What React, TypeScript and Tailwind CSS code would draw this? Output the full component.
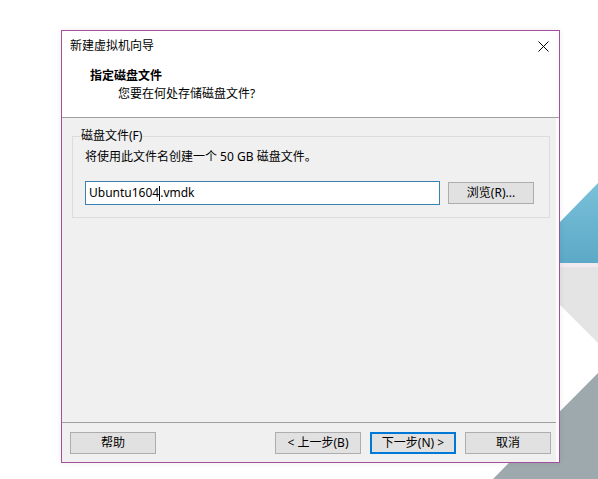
import React from "react";

const font = "font-['Noto_Sans','Noto_Sans_CJK_SC',sans-serif]";

function Btn({ label, primary }: { label: string; primary?: boolean }) {
  return (
    <div
      className={
        "w-[86px] h-[22px] flex items-center justify-center text-[12px] leading-[18px] text-black bg-[#e1e1e1] " +
        (primary ? "border-2 border-[#0078d7]" : "border border-[#adadad]")
      }
    >
      {label}
    </div>
  );
}

export default function App() {
  return (
    <div className={"relative w-[598px] h-[479px] overflow-hidden bg-white pt-[30px] pl-[61px] " + font}>
      <svg className="absolute inset-0" width="598" height="479" viewBox="0 0 598 479">
        <defs>
          <linearGradient id="bl" x1="0" y1="0" x2="0" y2="1">
            <stop offset="0" stopColor="#7ac0d9" />
            <stop offset="1" stopColor="#5ca9c7" />
          </linearGradient>
        </defs>
        <polygon points="520,263 598,183 598,263" fill="url(#bl)" />
        <rect x="520" y="263" width="78" height="4" fill="#f1eaf0" />
        <polygon points="520,267 598,267 598,343 522,267" fill="#e4e4e4" />
        <polygon points="598,373 598,479 493,479" fill="#9ea9ae" />
      </svg>

      <div className="relative w-[499px] h-[433px] border border-[#a4509c] bg-white flex flex-col shadow-[0_0_6px_rgba(0,0,0,0.08)]">
        {/* title bar */}
        <div className="h-[30px] flex items-center justify-between pl-[8px] pr-[10px] text-[12px] leading-[18px] text-black">
          <span>新建虚拟机向导</span>
          <svg width="11" height="11" viewBox="0 0 11 11">
            <path d="M0.5 0.5 L10.5 10.5 M10.5 0.5 L0.5 10.5" stroke="#000" strokeWidth="1" />
          </svg>
        </div>
        {/* header */}
        <div className="h-[57px] border-b border-[#a0a0a0] pt-[6px] text-[12px] leading-[18px] text-black">
          <div className="pl-[28px] font-bold">指定磁盘文件</div>
          <div className="pl-[56px]">您要在何处存储磁盘文件?</div>
        </div>
        {/* body */}
        <div className="h-[305px] border-b border-[#a0a0a0] bg-[#f0f0f0] mr-[3px] pt-[18px] pl-[10px]">
          <div className="relative w-[478px] h-[82px] border border-[#dcdcdc] pt-[11px] pl-[12px] text-[12px] leading-[18px] text-black">
            <span className="absolute left-[7px] top-[-10px] bg-[#f0f0f0] px-[1px]">磁盘文件(F)</span>
            <div>将使用此文件名创建一个 50 GB 磁盘文件。</div>
            <div className="mt-[15px] flex items-center gap-[8px]">
              <div className="w-[355px] h-[24px] border border-[#3c7fb1] bg-white flex items-center pl-[3px]">
                <span>Ubuntu1604</span>
                <span className="inline-block w-px h-[15px] bg-black" />
                <span>.vmdk</span>
              </div>
              <Btn label="浏览(R)..." />
            </div>
          </div>
        </div>
        {/* footer */}
        <div className="flex-1 bg-[#f0f0f0] mr-[3px] pt-[9px] pl-[8px] flex items-start">
          <Btn label="帮助" />
          <div className="ml-[119px] flex gap-[9px]">
            <Btn label="< 上一步(B)" />
            <Btn label="下一步(N) >" primary />
            <Btn label="取消" />
          </div>
        </div>
      </div>
    </div>
  );
}
